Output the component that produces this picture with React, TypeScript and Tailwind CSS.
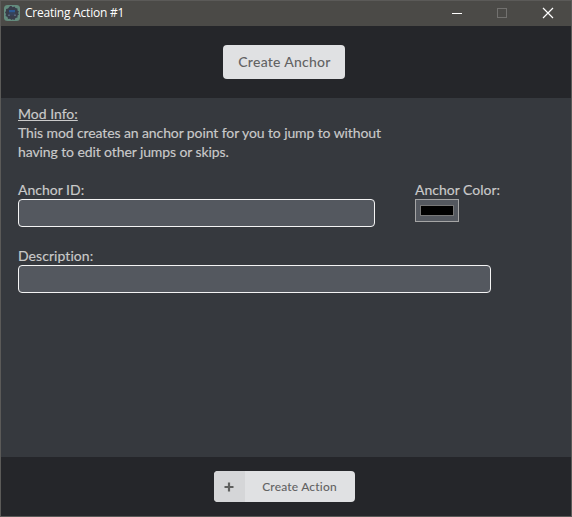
import React from "react";

function AppIcon() {
  return (
    <svg width="16" height="16" viewBox="0 0 16 16">
      <rect width="16" height="16" rx="3.5" fill="#648c7e" />
      <path d="M6 1h1.500l1 1.200L10.500 1.500l1 1.500 2 .5v2l1.500 1-1 1.500 1 1.500-1.500 1v2l-2 .5-1 2-2-.8-1 .8-1.500-1.200-2 .2-.5-2L1.500 11l.5-2-1-1.500L2 6V4l2-.5z" fill="#383d4a" />
      <rect x="5" y="5" width="6" height="2.500" fill="#2c5a94" />
      <rect x="5" y="7.500" width="6" height="3" fill="#36435a" />
      <rect x="4" y="9.500" width="2" height="1.500" fill="#59657a" />
      <rect x="10" y="9.500" width="2" height="1.500" fill="#59657a" />
    </svg>
  );
}

function TitleBar() {
  return (
    <div className="flex h-[25px] shrink-0 items-start bg-[#4b4a47] pl-[3px] [-webkit-text-stroke:0px]">
      <div className="mt-1">
        <AppIcon />
      </div>
      <span className="ml-[5px] mt-1 grow whitespace-nowrap font-['Open_Sans',sans-serif] text-[12px] leading-4 tracking-[-0.22px] text-white">
        Creating Action #1
      </span>
      <svg width="120" height="25" viewBox="0 0 120 25" fill="none" shapeRendering="crispEdges">
        <path d="M1 12.500h10" stroke="#fff" />
        <rect x="46.500" y="7.500" width="9" height="9" stroke="#72716f" />
        <path d="M92 7l10 10M102 7l-10 10" stroke="#fff" strokeWidth="1.200" shapeRendering="auto" />
      </svg>
    </div>
  );
}

function Field({ label, className }: { label: string; className: string }) {
  return (
    <label className={className}>
      <span className="block h-[19px]">{label}</span>
      <input className="block h-7 w-full rounded-[4px] border border-[#f4f4f4] bg-[#54585f] px-2 outline-none" />
    </label>
  );
}

export default function App() {
  return (
    <div className="flex h-[517px] w-[572px] flex-col border border-[#5b5a58] bg-[#36393e] font-[Lato,sans-serif] text-[14px] leading-[19px] text-[#cacaca] [font-variant-ligatures:none] [-webkit-text-stroke:0.15px]">
      <TitleBar />
      <header className="flex h-[72px] shrink-0 items-start justify-center bg-[#25262a] pt-[19px]">
        <button className="mr-1 h-[34px] w-[122px] rounded-[4px] bg-[#e0e1e3] pb-0.5 pl-px text-[14px] font-medium tracking-[0.27px] text-[#636363] [-webkit-text-stroke:0px]">
          Create Anchor
        </button>
      </header>
      <main className="grow pl-[17px] pt-1.5">
        <p className="h-[57px] whitespace-nowrap tracking-[-0.1px]">
          <u className="tracking-normal">Mod Info:</u>
          <br />
          This mod creates an anchor point for you to jump to without
          <br />
          having to edit other jumps or skips.
        </p>
        <div className="mt-[19px] flex gap-10">
          <Field label="Anchor ID:" className="w-[357px]" />
          <div>
            <span className="block h-[19px]">Anchor Color:</span>
            <div className="h-[23px] w-11 border border-[#a5a5a5] bg-[#54585f] px-1 py-[5px]">
              <div className="h-[11px] border border-[#777] bg-black" />
            </div>
          </div>
        </div>
        <Field label="Description:" className="mt-[19px] block w-[473px] tracking-[0.06px]" />
      </main>
      <footer className="flex h-[59px] shrink-0 items-center justify-center bg-[#25262a]">
        <button className="mr-[3px] flex h-[31px] w-[141px] overflow-hidden rounded-[4px] bg-[#e0e1e3] text-[12px] font-medium leading-[31px] tracking-[0.18px] text-[#636363] [-webkit-text-stroke:0px]">
          <span className="flex h-full w-[31px] items-center justify-center bg-[#d5d6d8] pr-px">
            <svg width="10" height="10" viewBox="0 0 10 10">
              <path d="M5 .5v9M.5 5h9" stroke="#5f605f" strokeWidth="2.200" />
            </svg>
          </span>
          <span className="grow pr-px text-center">Create Action</span>
        </button>
      </footer>
    </div>
  );
}
